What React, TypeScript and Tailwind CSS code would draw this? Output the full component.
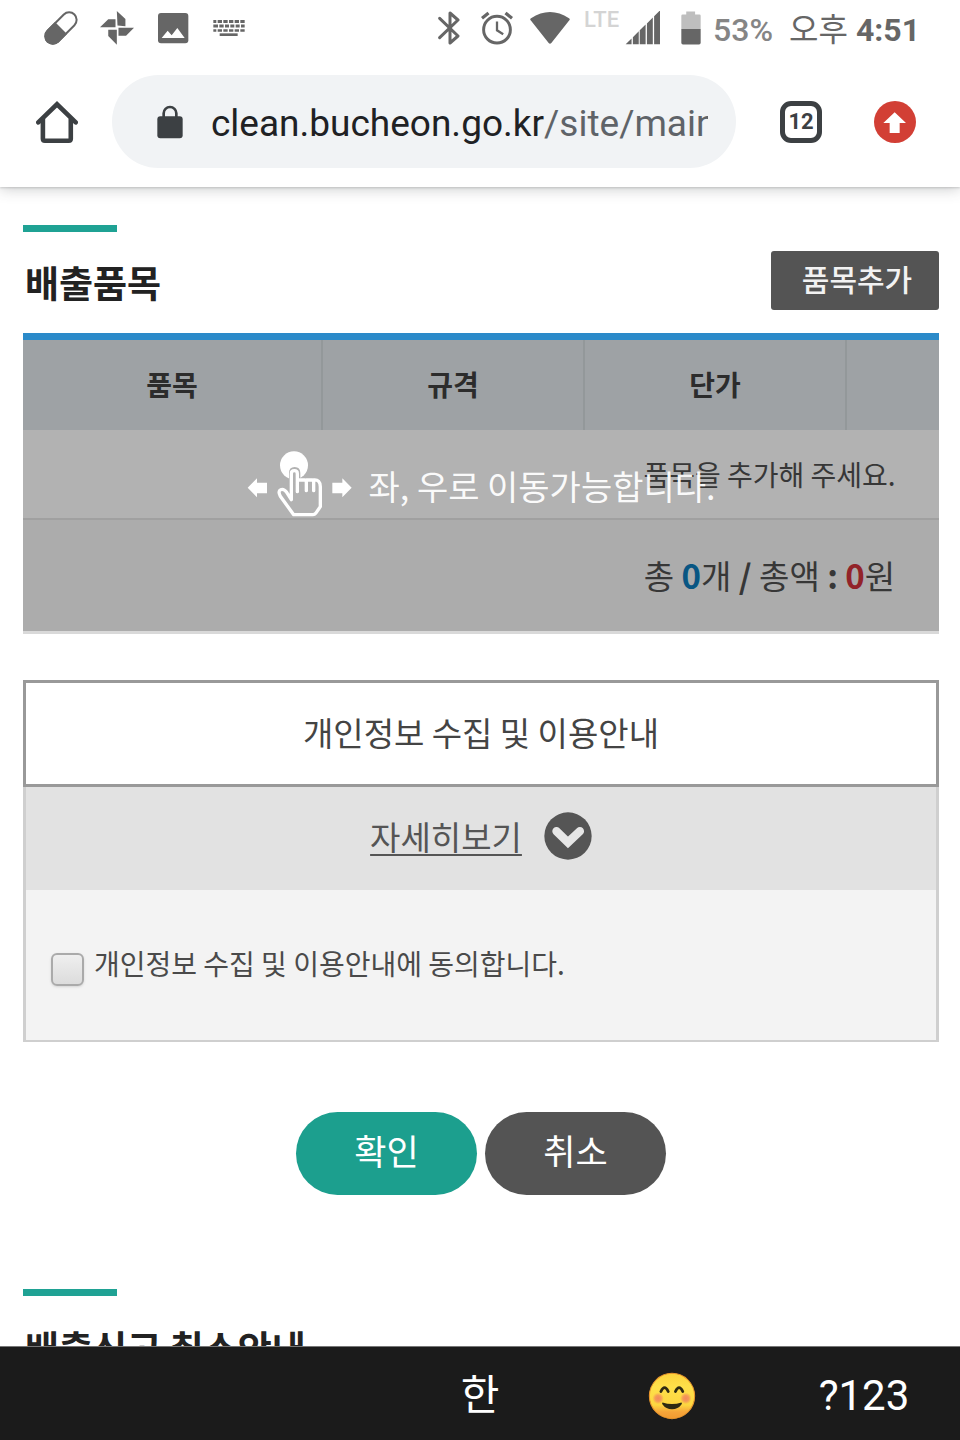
import { useState } from "react";

const columns = ["품목", "규격", "단가", ""];

function StatusBar() {
  return (
    <div className="flex h-14 items-center justify-between pl-11 pr-10 text-[#666]">
      <div className="flex items-center gap-[22px]">
        <svg className="size-[34px]" viewBox="0 0 34 34" aria-hidden="true">
          <g transform="rotate(-45 17 17)">
            <rect x="-2" y="9.5" width="38" height="15" rx="7.5" fill="none" stroke="currentColor" strokeWidth="2" />
            <path d="M17 8.5H5.5a8.5 8.5 0 0 0 0 17H17z" fill="currentColor" />
          </g>
        </svg>
        <svg className="size-[34px]" viewBox="299 33 103 103" fill="currentColor" aria-hidden="true">
          <path d="M350 33l26 24v22l-24-2zM299 82l25-24h22v24zM402 84l-24 24h-23v-24zM350 135l-26-26V90h26z" />
        </svg>
        <svg className="size-[34px]" viewBox="467 33 102 102" aria-hidden="true">
          <rect x="473" y="39" width="91" height="91" rx="9" fill="currentColor" />
          <path d="M484 114l18-22 12 14 17-22 22 30z" fill="#fff" />
        </svg>
        <svg className="size-[34px]" viewBox="636 33 102 102" stroke="currentColor" fill="none" aria-hidden="true">
          <path d="M640 64.500h94" strokeWidth="9" strokeDasharray="9 4 13 4 13 4 13 4 13 4 13" />
          <path d="M640 78h94" strokeWidth="9" strokeDasharray="14 4 13 4 12 4 12 4 12 4 12" />
          <path d="M640 91.500h94" strokeWidth="8" strokeDasharray="9 4 13 4 13 4 13 4 13 4 13" />
          <path d="M659 104h54" strokeWidth="8" />
        </svg>
      </div>

      <div className="flex items-center">
        <svg className="h-[34px] w-6" viewBox="53 33 72 102" fill="none" stroke="currentColor" strokeWidth="9" strokeLinecap="round" strokeLinejoin="round" aria-hidden="true">
          <path d="M61 55l55 53-24 21V39l24 21-55 53" />
        </svg>
        <svg className="ml-5 h-[34px] w-8" viewBox="180 33 98 102" fill="none" stroke="currentColor" aria-hidden="true">
          <circle cx="229" cy="89" r="41" strokeWidth="9" />
          <path d="M229 64v27l19 12" strokeWidth="7" />
          <path d="M183 54l20-16M255 38l20 16" strokeWidth="10" />
        </svg>
        <svg className="ml-[17px] h-[34px] w-10" viewBox="328 33 120 102" fill="currentColor" aria-hidden="true">
          <path d="M331 55q57-38 114 0q4 3 1 6l-54 68q-4 4-8 0l-54-68q-3-3 1-6z" />
        </svg>
        <span className="ml-3.5 mb-4 text-[22px] leading-5 font-medium text-[#d4d4d4]">LTE</span>
        <svg className="ml-1.5 h-[34px] w-9" viewBox="613 30 108 104" fill="currentColor" aria-hidden="true">
          <path d="M614 132l18-18v18zM636 110l18-18v40h-18zM657 89l18-18v61h-18zM679 68l18-18v82h-18zM701 46l18-18v104h-18z" />
        </svg>
        <svg className="ml-5 h-[34px] w-5" viewBox="122 32 61 102" aria-hidden="true">
          <path d="M123 87V46q0-4 4-4h11v-9h27v9h13q4 0 4 4v41z" fill="#bebebe" />
          <path d="M123 86h59v42q0 5-5 5h-49q-5 0-5-5z" fill="currentColor" />
        </svg>
        <span className="ml-3 pt-[3px] text-[32px] leading-9 font-medium text-[#858585]">53%</span>
        <span className="ml-4 pt-[3px] text-[32px] leading-9">오후</span>
        <span className="ml-2 pt-[3px] text-[32px] leading-9 font-bold">4:51</span>
      </div>
    </div>
  );
}

function BrowserBar() {
  return (
    <div className="flex items-center pt-[19px] pb-[19px] pl-9 pr-11">
      <button type="button" aria-label="Home">
        <svg className="size-[42px]" viewBox="107 299 126 128" fill="none" stroke="#3c4043" strokeWidth="14" aria-hidden="true">
          <path d="M127 352v62q0 6 6 6h73q6 0 6-6v-62" />
          <path d="M113 364l57-55 57 55" strokeLinecap="round" />
        </svg>
      </button>
      <div className="ml-[34px] flex h-[93px] min-w-0 flex-1 items-center rounded-full bg-[#f1f3f5] pl-11 pr-7">
        <svg className="mr-[27px] h-[34px] w-7 shrink-0" viewBox="464 311 84 102" aria-hidden="true">
          <rect x="468" y="345" width="76" height="66" rx="9" fill="#3c4043" />
          <path d="M487 348v-12a19 19 0 0 1 38 0v12" fill="none" stroke="#3c4043" strokeWidth="8" />
        </svg>
        <span className="overflow-hidden pt-[5px] text-[37px] leading-[48px] whitespace-nowrap text-[#202124]">
          clean.bucheon.go.kr<span className="text-[#5f6368]">/site/main</span>
        </span>
      </div>
      <button type="button" className="ml-11 size-[42px] rounded-[11px] border-[5px] border-[#3c4043] text-[22px] leading-8 font-bold text-[#3c4043]">
        12
      </button>
      <button type="button" aria-label="Update" className="ml-[52px]">
        <svg className="size-[42px]" viewBox="702 300 126 126" aria-hidden="true">
          <circle cx="765" cy="363" r="63" fill="#d23f35" />
          <path d="M764 334l34 32h-19v30h-30v-30h-19z" fill="#fff" />
        </svg>
      </button>
    </div>
  );
}

function SwipeHint() {
  return (
    <div className="pointer-events-none absolute inset-0 flex items-center justify-center gap-4 bg-black/30 pb-[3px] text-white/95">
      <svg className="h-[67px] w-[106px] shrink-0" viewBox="82 60 318 201" aria-hidden="true">
        <path d="M84 170l28-28v13h30v32h-30v12zM396 170l-28-28v13h-30v32h30v12z" fill="#fff" />
        <circle cx="223" cy="103" r="42" fill="#fff" />
        <path d="M215 206v-80q0-11 10-11t10 11v30z" fill="#b2b2b2" stroke="#b2b2b2" strokeWidth="14" />
        <path
          d="M215 206v-78q0-9 9-9t9 9v54v-35h22q5 0 5 8v24v-32h18q4 0 4 8v24v-32q20-2 20 20v60l-14 20q-3 4-8 4h-58l-40-55q-8-16 1-20q9-4 18 8z"
          fill="none"
          stroke="#fff"
          strokeWidth="10"
          strokeLinejoin="round"
        />
      </svg>
      <p className="pt-[3px] text-[34px] leading-10 whitespace-nowrap">좌, 우로 이동가능합니다.</p>
    </div>
  );
}

function ItemTable() {
  return (
    <div className="relative mt-[23px] overflow-hidden border-t-[7px] border-[#2b8ac9]">
      <table className="w-[1494px] table-fixed border-collapse text-center text-[#505050]">
        <thead>
          <tr className="h-[90px] bg-[#e3e9ed] text-[28px] text-[#404040]">
            {columns.map((name, i) => (
              <th
                key={i}
                scope="col"
                className="border-r-2 border-[#d3dadd] pb-0.5 font-bold first:w-[299px] last:w-auto nth-[2]:w-[262px] nth-[3]:w-[262px]"
              >
                {name}
              </th>
            ))}
          </tr>
        </thead>
        <tbody>
          <tr className="h-[89px] border-b-2 border-[#e6e6e6] bg-white text-[28px]">
            <td colSpan={4}>품목을 추가해 주세요.</td>
          </tr>
        </tbody>
        <tfoot>
          <tr className="h-28 bg-[#f7f7f7] text-[33px]">
            <td colSpan={4}>
              총 <b className="text-[#0c7cbc]">0</b>개 <b>/</b> 총액 <b>:</b> <b className="text-[#d2333b]">0</b>원
            </td>
          </tr>
        </tfoot>
      </table>
      <SwipeHint />
    </div>
  );
}

function PrivacyBox() {
  const [agreed, setAgreed] = useState(false);

  return (
    <section className="mt-[46px]">
      <h3 className="flex h-[107px] items-center justify-center border-[3px] border-[#999] bg-white pb-0.5 text-[33px] text-[#444]">
        개인정보 수집 및 이용안내
      </h3>
      <div className="border-x-[3px] border-b-2 border-[#cfcfcf]">
        <div className="flex h-[103px] items-center justify-center bg-[#e2e2e2] pb-1.5">
          <a href="#detail" className="flex items-center gap-[22px] text-[33px] leading-10 text-[#555]">
            <span className="underline decoration-2 underline-offset-4">자세히보기</span>
            <svg className="size-12" viewBox="611 97 142 142" aria-hidden="true">
              <circle cx="682" cy="168" r="70" fill="#555" />
              <path d="M648 154l34 33 35-33" fill="none" stroke="#e6e6e6" strokeWidth="25" strokeLinecap="round" />
            </svg>
          </a>
        </div>
        <div className="flex h-[150px] items-center bg-[#f3f3f3] px-[25px]">
          <input
            id="agree"
            type="checkbox"
            checked={agreed}
            onChange={(e) => setAgreed(e.target.checked)}
            className="mt-2 size-[33px] appearance-none rounded-md border-2 border-[#aaa] bg-linear-to-b from-[#efefef] to-[#dcdcdc] shadow-sm checked:bg-[#1ca08f]"
          />
          <label htmlFor="agree" className="pb-1 pl-2.5 text-[28px] leading-10 text-[#4a4a4a]">
            개인정보 수집 및 이용안내에 동의합니다.
          </label>
        </div>
      </div>
    </section>
  );
}

function Emoji() {
  return (
    <svg className="size-12" viewBox="646 125 142 142" aria-hidden="true">
      <defs>
        <linearGradient id="face" x1="0" y1="0" x2="0" y2="1">
          <stop offset="0" stopColor="#fbd23c" />
          <stop offset=".3" stopColor="#fee04a" />
          <stop offset=".7" stopColor="#fdd640" />
          <stop offset=".85" stopColor="#f6a53a" />
          <stop offset="1" stopColor="#f19a30" />
        </linearGradient>
        <radialGradient id="cheek">
          <stop offset="0" stopColor="#f28a5c" />
          <stop offset=".5" stopColor="#f28a5c" stopOpacity=".8" />
          <stop offset="1" stopColor="#f28a5c" stopOpacity="0" />
        </radialGradient>
      </defs>
      <circle cx="717" cy="196" r="67" fill="url(#face)" stroke="#e9952b" strokeWidth="3" />
      <circle cx="676" cy="203" r="17" fill="url(#cheek)" />
      <circle cx="758" cy="203" r="17" fill="url(#cheek)" />
      <path d="M684 183q11-23 22 0M727 183q11-23 22 0" fill="none" stroke="#2e2a12" strokeWidth="8" strokeLinecap="round" />
      <path d="M689 215q28 9 56 0q3 2 0 6q-10 14-28 14t-28-14q-3-4 0-6z" fill="#2e2a12" />
    </svg>
  );
}

export default function App() {
  return (
    <div className="flex h-screen flex-col bg-white font-[Roboto,'Noto_Sans_CJK_KR',sans-serif]">
      <header className="relative z-10 bg-white shadow-[0_1px_2px_rgba(60,64,67,0.2),0_1px_14px_rgba(60,64,67,0.3)]">
        <StatusBar />
        <BrowserBar />
      </header>

      <main className="min-h-0 flex-1 overflow-hidden pt-[38px] pl-[23px] pr-[21px] font-['Noto_Sans_CJK_KR',sans-serif]">
        <div className="h-[7px] w-[94px] bg-[#1fa294]" />
        <div className="mt-[19px] flex h-[59px] items-center justify-between">
          <h2 className="pt-[3px] pl-0.5 text-[37px] leading-[59px] font-bold text-[#222]">배출품목</h2>
          <button type="button" className="h-[59px] w-[168px] rounded-[3px] bg-[#545454] pb-1 pl-1 text-[30px] font-medium text-[#f2f2f2]">
            품목추가
          </button>
        </div>
        <ItemTable />
        <div className="h-[3px] bg-[#d9d9d9]" />
        <PrivacyBox />

        <div className="mt-[70px] flex justify-center gap-2 text-[35px] text-white">
          <button type="button" className="h-[83px] w-[181px] rounded-full bg-[#1c9f8e] pb-1.5">확인</button>
          <button type="button" className="h-[83px] w-[181px] rounded-full bg-[#545454] pb-1.5">취소</button>
        </div>

        <div className="mt-[94px] h-[7px] w-[94px] bg-[#1fa294]" />
        <h2 className="mt-[19px] pt-[3px] pl-0.5 text-[37px] leading-[59px] font-bold text-[#222]">배출신고 취소안내</h2>
      </main>

      <footer className="grid h-[94px] shrink-0 grid-cols-5 items-center border-t border-[#777] bg-[#1b1b1b] pt-[5px] text-[42px] leading-[56px] text-white">
        <button type="button" className="col-start-3">한</button>
        <button type="button" aria-label="Emoji" className="flex justify-center">
          <Emoji />
        </button>
        <button type="button">?123</button>
      </footer>
    </div>
  );
}
